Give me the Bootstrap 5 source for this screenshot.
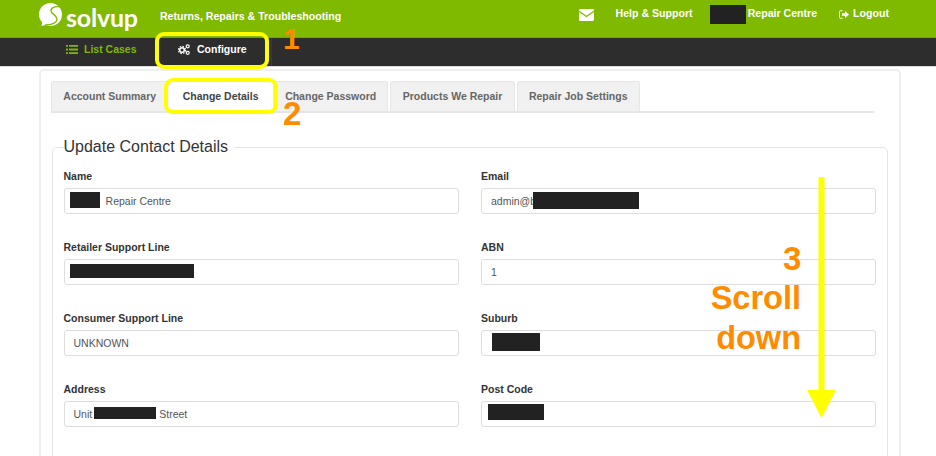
<!DOCTYPE html>
<html lang="en">
<head>
<meta charset="utf-8">
<title>Solvup</title>
<link href="https://cdn.jsdelivr.net/npm/bootstrap@5.3.0/dist/css/bootstrap.min.css" rel="stylesheet">
<style>
html,body{height:456px;overflow:hidden;background:#fff}
body{font-family:"Liberation Sans",Arial,sans-serif;position:relative;color:#333}
.sv-top{height:38px;background:#7fb900;color:#fff;padding:0 47px 0 39px;border-bottom:1px solid #74a800}
.sv-logo{font-family:"Lato",sans-serif;font-weight:700;font-size:25px;line-height:1;letter-spacing:-.2px;margin-left:4px;position:relative;top:-1px}
.sv-mark{width:23px;height:24px;margin-top:-7px}
.sv-brand{font-size:10.6px;font-weight:700;margin-left:22px;margin-top:-3px}
.sv-link{font-size:10.6px;font-weight:700;color:#fff;text-decoration:none;margin-top:-9px}
.sv-redact{background:#222;display:inline-block}
.sv-who{width:36px;height:19px;margin:-9px 2px 0 17px}
.sv-mail{margin:-8px 22px 0 0}
.sv-out{margin:-9px 4px 0 22px}
.sv-sub{height:29px;background:#2d2d2d;border-bottom:1px solid #ddd;padding-left:66px}
.sv-sub a{font-size:10.5px;font-weight:700;text-decoration:none;display:flex;align-items:center;height:28px;padding-bottom:5px}
.sv-sub svg{margin-right:6px}
.sv-list{color:#7fb900;width:89px}
.sv-conf{color:#fff;width:117px;padding-left:23px;border-right:1px solid #3a3a3a}
.sv-conf svg{margin-right:7px}
.sv-panel{margin:2px 35px 0 39px;border:2px solid #eee;border-radius:5px;padding:10px 10px 0;height:520px}
.sv-tabs{margin-right:15px;border-bottom:2px solid #e6e6e6;gap:2px;height:32px}
.sv-tabs .nav-link{font-size:10.5px;font-weight:700;color:#666;background:#f1f1f1;border:1px solid #e6e6e6;border-bottom:0;border-radius:3px 3px 0 0;padding:0 11.3px;height:30px;line-height:29px;margin:0}
.sv-tabs .nav-link.active{background:#fff;color:#444;border-color:#fff}
.sv-set{border:1px solid #e4e4e4;border-radius:5px;margin:22px 1px 0;padding:0 11px 30px 10.5px;min-width:0;height:460px}
.sv-set legend{float:none;width:auto;font-size:16px;line-height:24px;margin:-1px 0 0;padding:0 6px 0 0;color:#333;background:#fff;position:relative}
.sv-grid{display:grid;grid-template-columns:395px 395px;column-gap:22.5px;row-gap:23px;margin-top:7px}
.sv-field label{font-size:10.5px;font-weight:700;color:#333;display:block;line-height:14px;margin-bottom:5px;margin-top:3px}
.sv-field{position:relative}
.sv-field .form-control{height:26px;font-size:10.5px;color:#555;border:1px solid #ddd;border-radius:3px;padding:0 9px;box-shadow:none}
.sv-r{position:absolute;background:#222}
.sv-hl{position:absolute;border:4.5px solid #ff0;border-radius:9px;z-index:5}
.sv-num{position:absolute;color:#ff8c00;font-weight:700;z-index:6;line-height:1}
.sv-arrow{position:absolute;left:806px;top:176px;z-index:6}
</style>
</head>
<body>
<header class="sv-top d-flex align-items-center">
  <svg class="sv-mark" viewBox="0 0 23 24" aria-hidden="true"><path fill="#fff" d="M11.500 0C18 0 23 5 23 11.500S18 23 11.500 23c-2 0-3.500-.3-5-1-1.500.6-3 1-4.500.8C3 22 3.500 20.500 3 19 1 17 0 14.500 0 11.500 0 5 5 0 11.500 0z"/><path fill="none" stroke="#7fb900" stroke-width="1.400" stroke-linecap="round" d="M23 4.500C18 2.500 12.500 4 12 7.500c-.5 3.500 6.500 4.500 6 9-.3 3-5 5.500-11.500 5.500"/></svg>
  <span class="sv-logo">solvup</span>
  <span class="sv-brand">Returns, Repairs &amp; Troubleshooting</span>
  <svg class="ms-auto sv-mail" width="15" height="12" viewBox="0 0 15 12" aria-hidden="true"><path fill="#fff" d="M0 1.200C0 .5.500 0 1.200 0h12.600c.7 0 1.200.5 1.200 1.200v.3L7.500 6.800 0 1.500zM0 3l7.500 5.300L15 3v7.800c0 .7-.5 1.200-1.200 1.200H1.200C.5 12 0 11.500 0 10.800z"/></svg>
  <a class="sv-link" href="#">Help &amp; Support</a>
  <span class="sv-redact sv-who"></span>
  <a class="sv-link" href="#">Repair Centre</a>
  <svg class="sv-out" width="10" height="9" viewBox="0 0 10 9" aria-hidden="true"><path fill="none" stroke="#fff" d="M3.500.7H1.500a1 1 0 0 0-1 1v5.600a1 1 0 0 0 1 1h2"/><path fill="#fff" d="M3 3.200h3V1l4 3.500L6 8V5.800H3z"/></svg>
  <a class="sv-link" href="#">Logout</a>
</header>
<nav class="sv-sub d-flex align-items-center">
  <a class="sv-list" href="#"><svg width="12" height="9" viewBox="0 0 12 9" aria-hidden="true"><path fill="#7fb900" d="M0 0h2v1.800H0zM3 0h9v1.800H3zM0 3.600h2v1.800H0zM3 3.600h9v1.800H3zM0 7.200h2V9H0zM3 7.200h9V9H3z"/></svg>List Cases</a>
  <a class="sv-conf" href="#"><svg width="12" height="11" viewBox="0 0 12 11" aria-hidden="true"><circle cx="4" cy="6" r="2.300" fill="none" stroke="#fff" stroke-width="1.500"/><circle cx="4" cy="6" r="3.600" fill="none" stroke="#fff" stroke-width="1.200" stroke-dasharray="1.500 1.330"/><circle cx="9.700" cy="2.300" r="1.500" fill="none" stroke="#fff" stroke-width="1.200"/><circle cx="9.700" cy="8.800" r="1.500" fill="none" stroke="#fff" stroke-width="1.200"/></svg>Configure</a>
</nav>
<main class="sv-panel">
  <ul class="nav sv-tabs">
    <li class="nav-item"><a class="nav-link" href="#">Account Summary</a></li>
    <li class="nav-item"><a class="nav-link active" href="#">Change Details</a></li>
    <li class="nav-item"><a class="nav-link" href="#">Change Password</a></li>
    <li class="nav-item"><a class="nav-link" href="#">Products We Repair</a></li>
    <li class="nav-item"><a class="nav-link" href="#">Repair Job Settings</a></li>
  </ul>
  <fieldset class="sv-set">
    <legend>Update Contact Details</legend>
    <div class="sv-grid">
      <div class="sv-field"><label>Name</label><input class="form-control" value="&nbsp;&nbsp;&nbsp;&nbsp;&nbsp;&nbsp;&nbsp;&nbsp;&nbsp;&nbsp;&nbsp;Repair Centre" readonly><span class="sv-r" style="left:6px;top:26px;width:30px;height:16px"></span></div>
      <div class="sv-field"><label>Email</label><input class="form-control" value="admin@b" readonly><span class="sv-r" style="left:52px;top:26px;width:106px;height:17px"></span></div>
      <div class="sv-field"><label>Retailer Support Line</label><input class="form-control" readonly><span class="sv-r" style="left:6px;top:27px;width:124px;height:14px"></span></div>
      <div class="sv-field"><label>ABN</label><input class="form-control" value="1" readonly></div>
      <div class="sv-field"><label>Consumer Support Line</label><input class="form-control" value="UNKNOWN" readonly></div>
      <div class="sv-field"><label>Suburb</label><input class="form-control" readonly><span class="sv-r" style="left:11px;top:25px;width:48px;height:18px"></span></div>
      <div class="sv-field"><label>Address</label><input class="form-control" value="Unit&nbsp;&nbsp;&nbsp;&nbsp;&nbsp;&nbsp;&nbsp;&nbsp;&nbsp;&nbsp;&nbsp;&nbsp;&nbsp;&nbsp;&nbsp;&nbsp;&nbsp;&nbsp;&nbsp;&nbsp;&nbsp;&nbsp;&nbsp;Street" readonly><span class="sv-r" style="left:30px;top:28px;width:62px;height:12px"></span></div>
      <div class="sv-field"><label>Post Code</label><input class="form-control" readonly><span class="sv-r" style="left:7px;top:25px;width:56px;height:16px"></span></div>
    </div>
  </fieldset>
</main>
<div class="sv-hl" style="left:155px;top:32px;width:114px;height:37px"></div>
<div class="sv-hl" style="left:164px;top:78px;width:114px;height:36px"></div>
<div class="sv-num" style="left:283px;top:24px;font-size:30px">1</div>
<div class="sv-num" style="left:283px;top:97px;font-size:33px">2</div>
<div class="sv-num" style="left:783px;top:242px;font-size:33px">3</div>
<div class="sv-num" style="left:700px;top:278px;width:101px;text-align:right;font-size:32.500px;line-height:40px">Scroll<br>down</div>
<svg class="sv-arrow" width="30" height="242" viewBox="0 0 30 242" aria-hidden="true"><path fill="#ff0" d="M12.500 1h6v213h-6z"/><path fill="#ff0" d="M1 214h29l-14.500 28z"/></svg>
<script src="https://cdn.jsdelivr.net/npm/bootstrap@5.3.0/dist/js/bootstrap.bundle.min.js"></script>
</body>
</html>
